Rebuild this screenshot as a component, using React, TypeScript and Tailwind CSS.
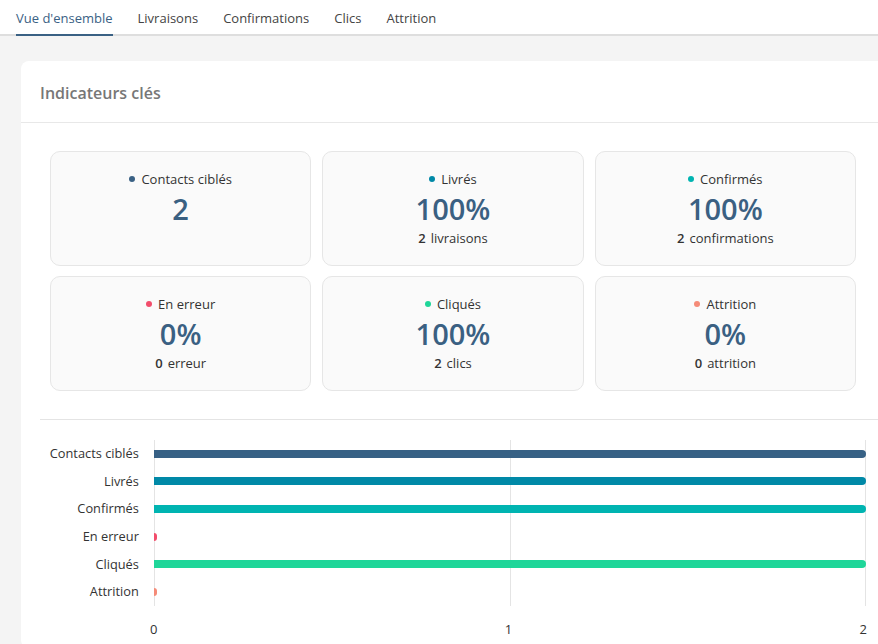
const tabs = ["Vue d'ensemble", "Livraisons", "Confirmations", "Clics", "Attrition"];

type Stat = {
  label: string;
  dot: string;
  value: string;
  count?: string;
  unit?: string;
};

const stats: Stat[] = [
  { label: "Contacts ciblés", dot: "bg-[#3a6184]", value: "2" },
  { label: "Livrés", dot: "bg-[#0089a7]", value: "100%", count: "2", unit: "livraisons" },
  { label: "Confirmés", dot: "bg-[#00b4b1]", value: "100%", count: "2", unit: "confirmations" },
  { label: "En erreur", dot: "bg-[#f24d6b]", value: "0%", count: "0", unit: "erreur" },
  { label: "Cliqués", dot: "bg-[#1fd699]", value: "100%", count: "2", unit: "clics" },
  { label: "Attrition", dot: "bg-[#f58b78]", value: "0%", count: "0", unit: "attrition" },
];

const bars = [
  { label: "Contacts ciblés", color: "bg-[#376185]", value: 2 },
  { label: "Livrés", color: "bg-[#0089a7]", value: 2 },
  { label: "Confirmés", color: "bg-[#00b4b1]", value: 2 },
  { label: "En erreur", color: "bg-[#f24d6b]", value: 0 },
  { label: "Cliqués", color: "bg-[#1fd699]", value: 2 },
  { label: "Attrition", color: "bg-[#f58b78]", value: 0 },
];

function StatCard({ stat }: { stat: Stat }) {
  return (
    <div className="flex h-[115px] flex-col items-center rounded-[10px] border border-[#e6e6e6] bg-[#fafafa] pt-[18px]">
      <div className="flex items-center gap-[6px] text-[13px] leading-[18px] text-[#333]">
        <span className={`h-[6px] w-[6px] rounded-full ${stat.dot}`} />
        {stat.label}
      </div>
      <div className="mt-[1px] text-[29px] font-semibold leading-[40px] text-[#3a6082]">{stat.value}</div>
      {stat.count && (
        <div className="text-[13px] leading-[18px] text-[#333]">
          <span className="mr-[5px] font-semibold">{stat.count}</span>
          {stat.unit}
        </div>
      )}
    </div>
  );
}

export default function App() {
  return (
    <div className="h-[644px] w-[878px] overflow-hidden bg-[#f4f4f4] font-['Open_Sans',sans-serif]">
      <nav className="flex h-[36px] gap-[25px] border-b-2 border-[#dedede] bg-white pl-[16px]">
        {tabs.map((t, i) => (
          <div
            key={t}
            className={`-mb-[2px] flex items-center border-b-2 pt-[3px] text-[13px] ${
              i === 0 ? "border-[#3a6184] text-[#3a6184]" : "border-transparent text-[#444]"
            }`}
          >
            {t}
          </div>
        ))}
      </nav>

      <div className="ml-[21px] mt-[25px] w-[864px] rounded-[8px] bg-white">
        <div className="flex h-[62px] items-center border-b border-[#e8e8e8] px-[19px] pt-[3px]">
          <h2 className="text-[16px] font-semibold text-[#777]">Indicateurs clés</h2>
        </div>

        <div className="px-[19px]">
          <div className="-mr-[19px] border-b border-[#e4e4e4] pr-[19px]">
            <div className="grid grid-cols-3 gap-x-[11px] gap-y-[10px] px-[10px] pb-[28px] pt-[28px]">
              {stats.map((s) => (
                <StatCard key={s.label} stat={s} />
              ))}
            </div>
          </div>

          <div className="pt-[20px]">
            <div className="flex">
              <div className="flex w-[99px] flex-col">
                {bars.map((b) => (
                  <div key={b.label} className="flex h-[27.6px] items-center justify-end whitespace-nowrap text-[12.8px] text-[#333]">
                    {b.label}
                  </div>
                ))}
              </div>
              <div className="relative ml-[15px] w-[713px]">
                <div className="absolute inset-y-0 left-0 w-px bg-[#e4e4e4]" />
                <div className="absolute inset-y-0 left-1/2 w-px bg-[#e4e4e4]" />
                <div className="absolute inset-y-0 right-0 w-px bg-[#e4e4e4]" />
                <div className="relative flex flex-col">
                  {bars.map((b) => (
                    <div key={b.label} className="flex h-[27.6px] items-center">
                      <div
                        className={`h-[8px] rounded-r-full ${b.color}`}
                        style={{ width: b.value === 0 ? 3 : `${(b.value / 2) * 100}%` }}
                      />
                    </div>
                  ))}
                </div>
              </div>
            </div>
            <div className="ml-[114px] flex w-[713px] justify-between pb-[10px] pt-[14px] text-[13px] leading-[18px] text-[#333]">
              <span className="-ml-[4px]">0</span>
              <span>1</span>
              <span>2</span>
            </div>
          </div>
        </div>
      </div>
    </div>
  );
}
